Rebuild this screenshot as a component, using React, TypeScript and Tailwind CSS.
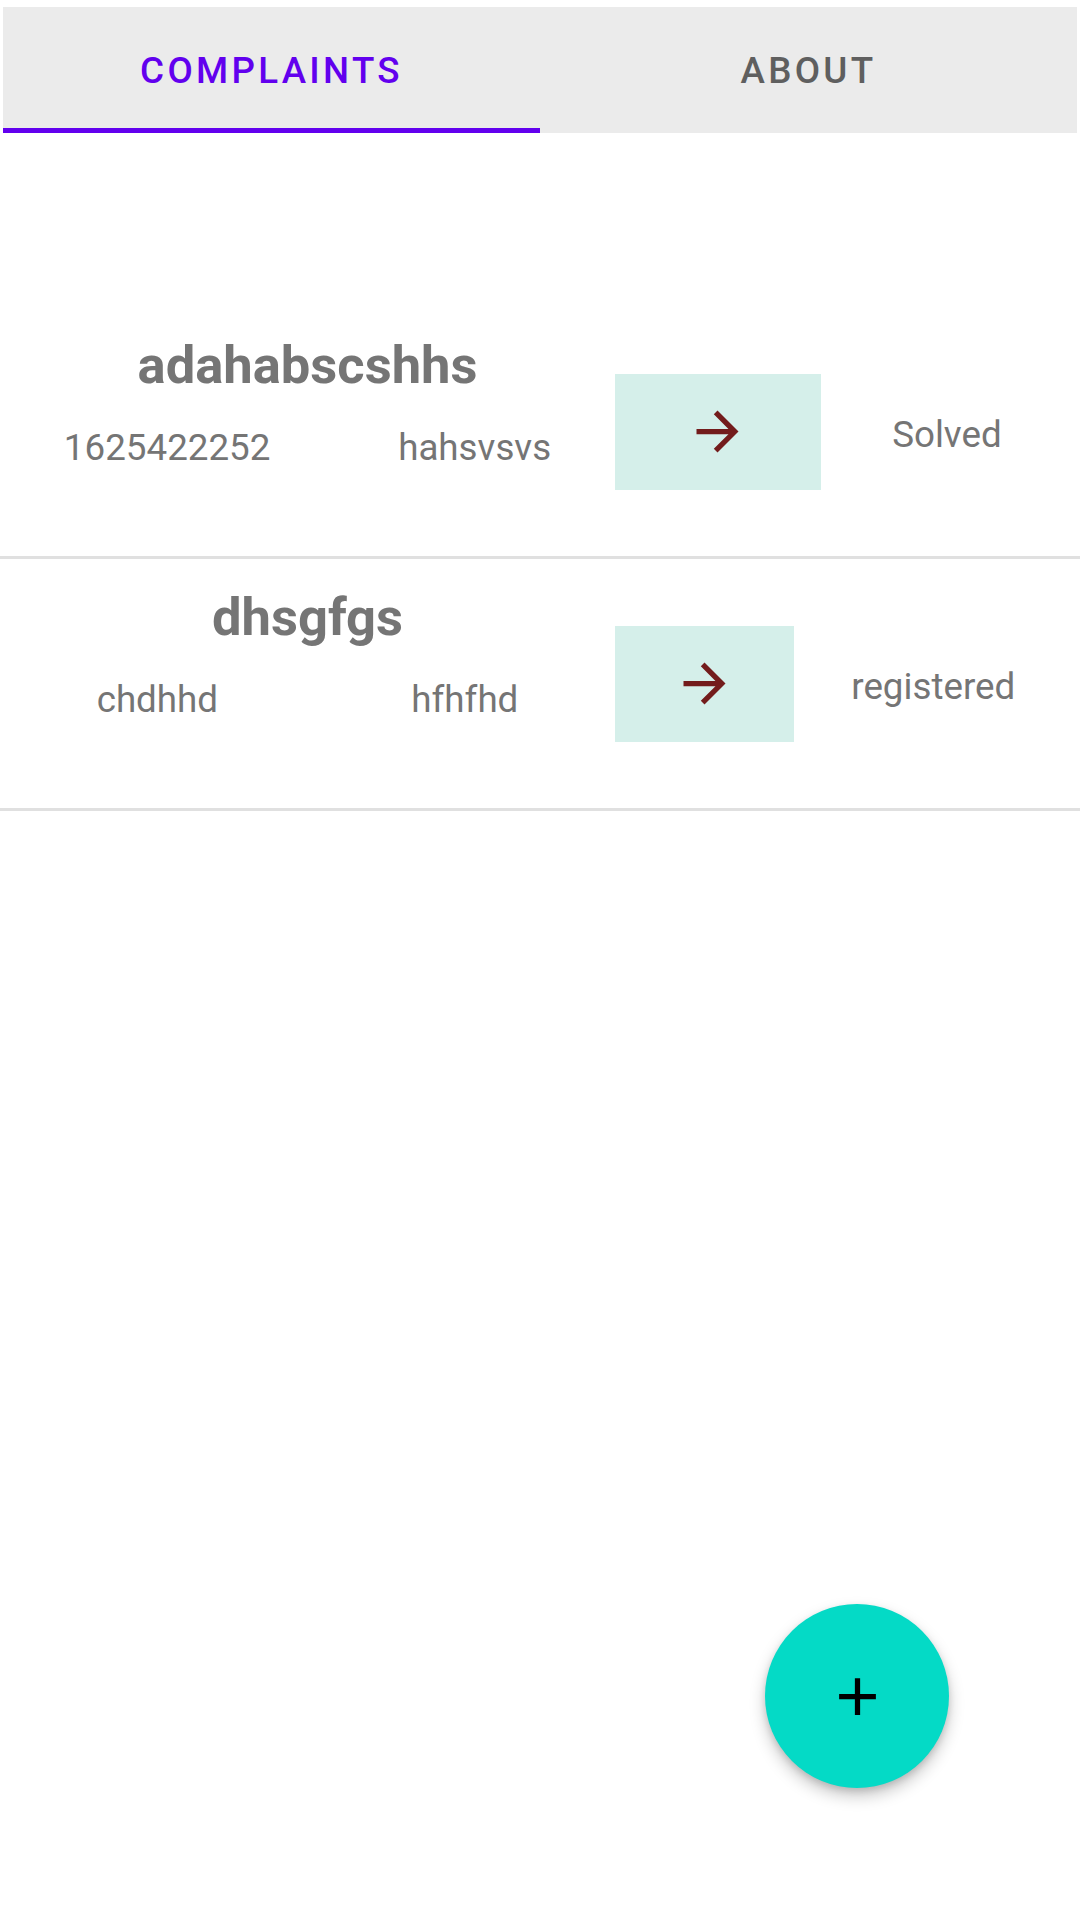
import React from 'react'

type Complaint = {
  titulo: string
  id: string
  lugar: string
  estado: string
}

const complaints: Complaint[] = [
  { titulo: 'adahabscshhs', id: '1625422252', lugar: 'hahsvsvs', estado: 'Solved' },
  { titulo: 'dhsgfgs', id: 'chdhhd', lugar: 'hfhfhd', estado: 'registered' },
]

function ArrowIcon() {
  return (
    <svg width="63" height="63" viewBox="0 0 24 24">
      <path d="M12 4l-1.41 1.41L16.17 11H4v2h12.17l-5.58 5.59L12 20l8-8z" fill="#731c1c" />
    </svg>
  )
}

function ComplaintRow({ c }: { c: Complaint }) {
  return (
    <div>
      <div className="flex h-[249px]">
        <div className="w-[615px] shrink-0 pt-[27px]">
          <div className="text-center text-[52.5px] leading-[62px] font-bold text-[#757575]">{c.titulo}</div>
          <div className="flex mt-[30px] text-[36.75px] leading-[43px] text-[#757575]">
            <div className="grow text-center">{c.id}</div>
            <div className="grow text-center">{c.lugar}</div>
          </div>
        </div>
        <div className="flex grow items-center">
          <button className="grow basis-[63px] h-[116px] bg-[#d5efea] flex items-center justify-center">
            <ArrowIcon />
          </button>
          <div className="grow pr-[7px] mt-[5px] text-center text-[36.75px] leading-[43px] text-[#757575]">
            {c.estado}
          </div>
        </div>
      </div>
      <div className="h-[3px] bg-[#e0e0e0]" />
    </div>
  )
}

export default function App() {
  return (
    <div className="relative min-h-[1920px] bg-white font-['Roboto',sans-serif]">
      <div className="pt-[7px] px-[3px]">
        <div className="flex h-[126px] bg-[#ebebeb]">
          <button className="flex-1 flex flex-col">
            <span className="flex-1 pt-[6px] flex items-center justify-center text-[36.75px] font-medium tracking-[3.3px] text-[#6200ee]">
              COMPLAINTS
            </span>
            <span className="h-[5px] bg-[#6200ee]" />
          </button>
          <button className="flex-1 flex flex-col">
            <span className="flex-1 pt-[6px] flex items-center justify-center text-[36.75px] font-medium tracking-[3.3px] text-[#5f5f5f]">
              ABOUT
            </span>
            <span className="h-[5px]" />
          </button>
        </div>
      </div>

      <div className="mt-[174px]">
        {complaints.map(c => (
          <ComplaintRow key={c.id} c={c} />
        ))}
      </div>

      <button className="absolute right-[131px] top-[1604px] w-[184px] h-[184px] rounded-full bg-[#04dac6] flex items-center justify-center shadow-[0_8px_16px_rgba(0,0,0,0.22),0_3px_6px_rgba(0,0,0,0.12)]">
        <svg width="63" height="63" viewBox="0 0 24 24">
          <path d="M19 13h-6v6h-2v-6H5v-2h6V5h2v6h6v2z" fill="#000" />
        </svg>
      </button>
    </div>
  )
}
